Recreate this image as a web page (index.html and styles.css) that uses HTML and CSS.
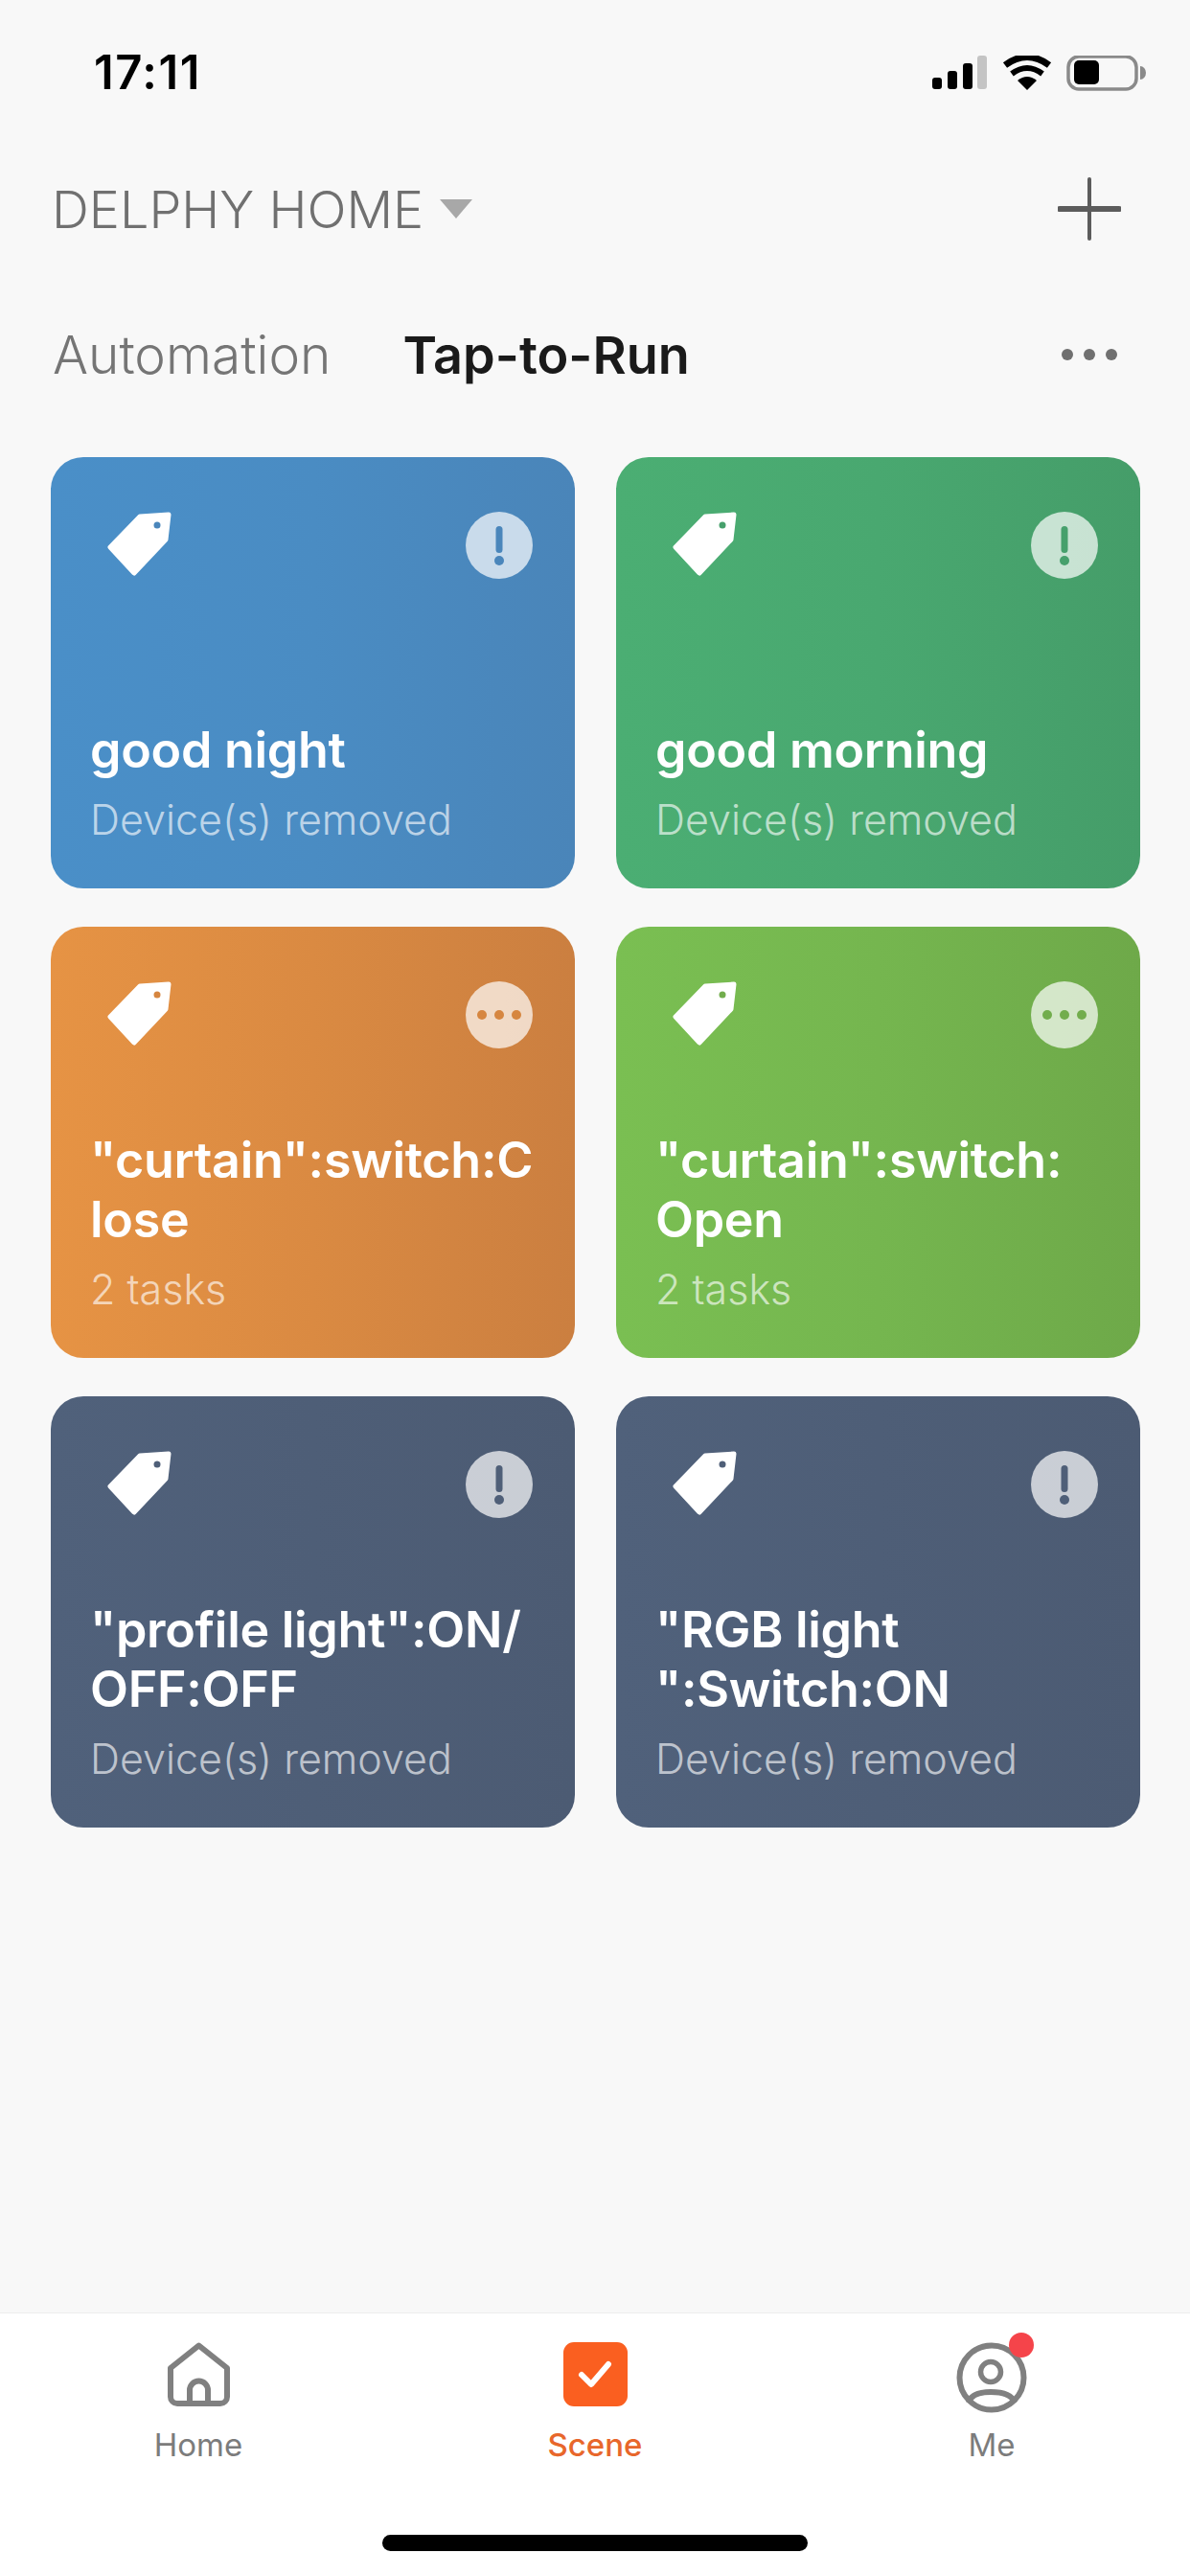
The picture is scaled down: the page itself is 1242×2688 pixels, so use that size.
FILE: index.html
```html
<!DOCTYPE html>
<html>
<head>
    <meta charset='utf-8'>
    <title>Scene</title>
    <meta name='viewport' content='width=device-width, initial-scale=1'>
    <link rel="stylesheet" href="styles.css">
</head>
<body>
    <svg class="sprites" width="0" height="0">
        <symbol id="tag" viewBox="0 0 67 67">
            <path d="M34 5 L64 3 L61 29 L28 64 L3 37 Z" fill="#fff" stroke="#fff" stroke-width="5" stroke-linejoin="round"/>
            <circle cx="52" cy="14" r="3.5" fill="currentColor"/>
        </symbol>
        <symbol id="alert" viewBox="0 0 70 70">
            <rect x="31.5" y="15" width="7" height="28" rx="3.5" fill="currentColor"/>
            <circle cx="35" cy="51" r="5" fill="currentColor"/>
        </symbol>
        <symbol id="more" viewBox="0 0 70 70">
            <circle cx="17" cy="35" r="5" fill="currentColor"/>
            <circle cx="35" cy="35" r="5" fill="currentColor"/>
            <circle cx="53" cy="35" r="5" fill="currentColor"/>
        </symbol>
    </svg>

    <div class="page">
        <div class="status">
            <span class="time">17:11</span>
            <svg class="status-icons" width="224" height="38" viewBox="0 0 224 38">
                <rect x="0" y="23" width="10" height="12" rx="3" fill="#000"/>
                <rect x="16" y="16" width="10" height="19" rx="3" fill="#000"/>
                <rect x="32" y="8" width="10" height="27" rx="3" fill="#000"/>
                <rect x="47" y="0" width="10" height="35" rx="3" fill="#c4c4c4"/>
                <path d="M99 36 L89 26 Q99 18 109 26 Z" fill="#000"/>
                <path d="M83 19 Q99 7 115 19" fill="none" stroke="#000" stroke-width="6"/>
                <path d="M76 10 Q99 -7 122 10" fill="none" stroke="#000" stroke-width="7"/>
                <rect x="142" y="1" width="71" height="34" rx="11" fill="none" stroke="#8a8a8a" stroke-width="3.5"/>
                <rect x="148" y="5" width="26" height="25" rx="5" fill="#000"/>
                <path d="M217 11 a6 7 0 0 1 0 14 Z" fill="#8a8a8a"/>
            </svg>
        </div>

        <header class="home-bar">
            <div class="home-name">
                <span>DELPHY HOME</span>
                <i class="caret"></i>
            </div>
            <svg width="66" height="66" viewBox="0 0 66 66">
                <path d="M33 2 V64" stroke="#5c5c5c" stroke-width="4" stroke-linecap="round"/>
                <path d="M2 33 H64" stroke="#5c5c5c" stroke-width="6" stroke-linecap="round"/>
            </svg>
        </header>

        <nav class="tabs">
            <span class="tab">Automation</span>
            <span class="tab tab-active">Tap-to-Run</span>
            <div class="dots"><i></i><i></i><i></i></div>
        </nav>

        <main class="grid">
            <div class="card blue">
                <div class="card-top">
                    <svg class="tag"><use href="#tag"/></svg>
                    <div class="badge"><svg><use href="#alert"/></svg></div>
                </div>
                <div class="card-text">
                    <div class="title">good night</div>
                    <div class="sub">Device(s) removed</div>
                </div>
            </div>
            <div class="card green">
                <div class="card-top">
                    <svg class="tag"><use href="#tag"/></svg>
                    <div class="badge"><svg><use href="#alert"/></svg></div>
                </div>
                <div class="card-text">
                    <div class="title">good morning</div>
                    <div class="sub">Device(s) removed</div>
                </div>
            </div>
            <div class="card orange">
                <div class="card-top">
                    <svg class="tag"><use href="#tag"/></svg>
                    <div class="badge"><svg><use href="#more"/></svg></div>
                </div>
                <div class="card-text">
                    <div class="title">"curtain":switch:C<br>lose</div>
                    <div class="sub">2 tasks</div>
                </div>
            </div>
            <div class="card lime">
                <div class="card-top">
                    <svg class="tag"><use href="#tag"/></svg>
                    <div class="badge"><svg><use href="#more"/></svg></div>
                </div>
                <div class="card-text">
                    <div class="title">"curtain":switch:<br>Open</div>
                    <div class="sub">2 tasks</div>
                </div>
            </div>
            <div class="card slate">
                <div class="card-top">
                    <svg class="tag"><use href="#tag"/></svg>
                    <div class="badge"><svg><use href="#alert"/></svg></div>
                </div>
                <div class="card-text">
                    <div class="title">"profile light":ON/<br>OFF:OFF</div>
                    <div class="sub">Device(s) removed</div>
                </div>
            </div>
            <div class="card slate">
                <div class="card-top">
                    <svg class="tag"><use href="#tag"/></svg>
                    <div class="badge"><svg><use href="#alert"/></svg></div>
                </div>
                <div class="card-text">
                    <div class="title">"RGB light<br>":Switch:ON</div>
                    <div class="sub">Device(s) removed</div>
                </div>
            </div>
        </main>

        <footer class="tabbar">
            <div class="tabbar-row">
                <div class="tabbar-item">
                    <div class="tabbar-icon">
                        <svg width="67" height="67" viewBox="0 0 67 67" fill="none" stroke="#808080" stroke-width="6" stroke-linejoin="round">
                            <path d="M33.5 3.5 L63 27 V57 a7 7 0 0 1 -7 7 H11 a7 7 0 0 1 -7 -7 V27 Z"/>
                            <path d="M24 64 V50 a9.5 9.5 0 0 1 19 0 V64"/>
                        </svg>
                    </div>
                    <span>Home</span>
                </div>
                <div class="tabbar-item tabbar-on">
                    <div class="tabbar-icon">
                        <svg width="67" height="67" viewBox="0 0 67 67">
                            <rect width="67" height="67" rx="11" fill="#fa5f20"/>
                            <path d="M19 34 L29 44 L47 23" fill="none" stroke="#fff" stroke-width="6" stroke-linecap="round" stroke-linejoin="round"/>
                        </svg>
                    </div>
                    <span>Scene</span>
                </div>
                <div class="tabbar-item">
                    <div class="tabbar-icon">
                        <svg width="74" height="74" viewBox="0 0 74 74" fill="none" stroke="#808080">
                            <circle cx="37" cy="37" r="33.5" stroke-width="6"/>
                            <circle cx="36" cy="31" r="10.5" stroke-width="5.5"/>
                            <path d="M13 63 Q16 52 36 52 Q57 52 61 63" stroke-width="6"/>
                        </svg>
                        <i class="dot"></i>
                    </div>
                    <span>Me</span>
                </div>
            </div>
            <div class="indicator"></div>
        </footer>
    </div>
</body>
</html>
```

FILE: styles.css
```css
* {
    box-sizing: border-box;
}
body {
    margin: 0;
    background-color: #f8f8f8;
    font-family: Inter, "Liberation Sans", sans-serif;
}
.sprites {
    display: block;
    height: 0;
}
.page {
    display: flex;
    flex-direction: column;
    width: 1242px;
    height: 2688px;
}
.status {
    display: flex;
    justify-content: space-between;
    align-items: flex-start;
    height: 130px;
    padding: 58px 45px 0 98px;
}
.time {
    font-size: 49px;
    font-weight: 600;
    line-height: 36px;
    letter-spacing: 1.5px;
    color: #000;
}
.status-icons {
    display: block;
}
.home-bar {
    display: flex;
    justify-content: space-between;
    align-items: center;
    height: 176px;
    padding: 0 72px 0 54px;
}
.home-name {
    display: flex;
    align-items: center;
    gap: 17px;
    font-size: 54px;
    font-weight: 300;
    color: #707070;
}
.caret {
    width: 0;
    height: 0;
    border-left: 17px solid transparent;
    border-right: 17px solid transparent;
    border-top: 20px solid #a8a8a8;
}
.tabs {
    display: flex;
    align-items: center;
    gap: 75px;
    height: 128px;
    padding: 0 76px 0 55px;
    font-size: 55px;
}
.tab {
    font-weight: 300;
    color: #757575;
}
.tab-active {
    font-weight: 600;
    font-size: 54px;
    color: #1a1a1a;
}
.dots {
    display: flex;
    gap: 11px;
    margin-left: auto;
}
.dots i {
    width: 12px;
    height: 12px;
    border-radius: 50%;
    background-color: #707070;
}
.grid {
    flex: 1;
    display: grid;
    grid-template-columns: 547px 547px;
    grid-auto-rows: 450px;
    gap: 40px 43px;
    padding: 43px 0 0 53px;
}
.card {
    display: flex;
    flex-direction: column;
    justify-content: space-between;
    padding: 57px 44px 41px 41px;
    border-radius: 34px;
}
.card-top {
    display: flex;
    justify-content: space-between;
    align-items: flex-start;
    padding-left: 18px;
}
.tag {
    width: 67px;
    height: 67px;
}
.badge {
    width: 70px;
    height: 70px;
    border-radius: 50%;
    background-color: rgba(255, 255, 255, 0.7);
}
.badge svg {
    display: block;
    width: 70px;
    height: 70px;
}
.title {
    font-size: 52px;
    font-weight: 600;
    line-height: 62px;
    letter-spacing: -0.3px;
    color: #fff;
}
.sub {
    margin-top: 10px;
    font-size: 43px;
    font-weight: 300;
    line-height: 62px;
    color: rgba(255, 255, 255, 0.65);
}
.blue {
    color: #4a86bb;
    background: linear-gradient(90deg, #4a8fc8, #4a8cc3 50%, #4a85b9);
}
.green {
    color: #46a06c;
    background: linear-gradient(90deg, #4bae73, #49a870 50%, #459d69);
}
.orange {
    color: #d68640;
    background: linear-gradient(90deg, #e69344, #da8a42 50%, #cb7f40);
}
.lime {
    color: #72ad4d;
    background: linear-gradient(90deg, #7abf52, #75b64f 50%, #6ea949);
}
.slate {
    color: #4f5f78;
    background: linear-gradient(90deg, #50617b, #4e5e77 50%, #4c5b73);
}
.tabbar {
    display: flex;
    flex-direction: column;
    align-items: center;
    height: 275px;
    padding-top: 30px;
    background-color: #fff;
    border-top: 1px solid #ededed;
}
.tabbar-row {
    display: grid;
    grid-template-columns: repeat(3, 414px);
    height: 201px;
}
.tabbar-item {
    display: flex;
    flex-direction: column;
    align-items: center;
    font-size: 33px;
    line-height: 38px;
    color: #7c7c7c;
}
.tabbar-on {
    font-weight: 500;
    color: #e8672b;
}
.tabbar-icon {
    position: relative;
    height: 88px;
}
.tabbar-icon svg {
    display: block;
}
.dot {
    position: absolute;
    top: -10px;
    right: -7px;
    width: 26px;
    height: 26px;
    border-radius: 50%;
    background-color: #f5444a;
}
.indicator {
    width: 444px;
    height: 17px;
    border-radius: 9px;
    background-color: #000;
}
```
